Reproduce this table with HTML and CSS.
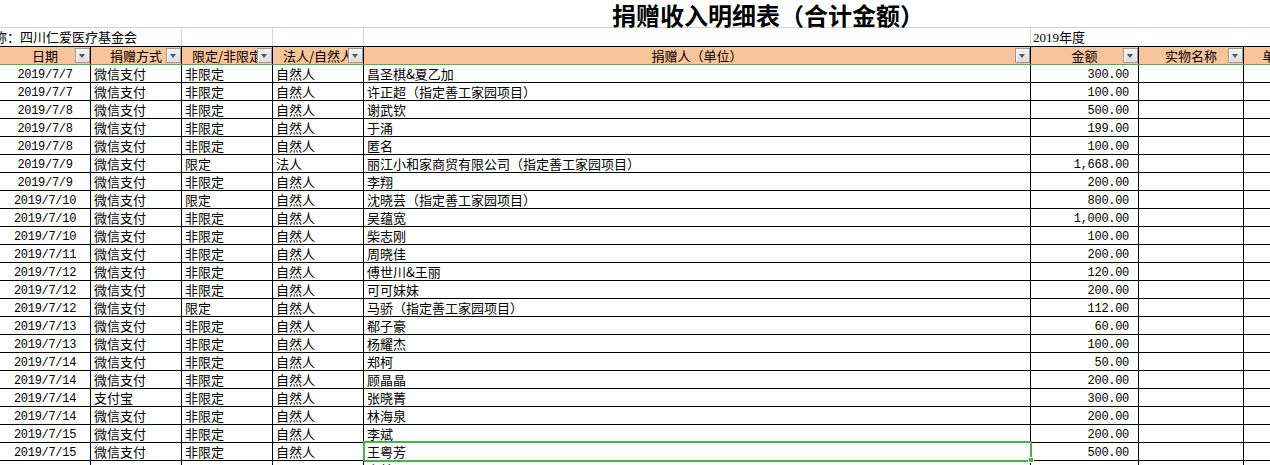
FILE: index.html
```html
<!DOCTYPE html>
<html lang="zh-CN">
<head>
<meta charset="utf-8">
<title>捐赠收入明细表</title>
<link rel="stylesheet" href="styles.css">
</head>
<body>
<div class="sheet">
  <div class="title-row"><span class="title">捐赠收入明细表（合计金额）</span></div>

  <div class="row info">
    <div class="cell span2"><span class="org">称：四川仁爱医疗基金会</span></div>
    <div class="cell g"></div>
    <div class="cell g"></div>
    <div class="cell g"></div>
    <div class="cell span3"><span class="yr">2019</span>年度</div>
  </div>

  <div class="row head">
    <div class="cell hc">日期<span class="fb"></span></div>
    <div class="cell hc">捐赠方式<span class="fb"></span></div>
    <div class="cell hc">限定/非限定<span class="fb"></span></div>
    <div class="cell hc">法人/自然人<span class="fb"></span></div>
    <div class="cell hc">捐赠人（单位）<span class="fb"></span></div>
    <div class="cell hc">金额<span class="fb"></span></div>
    <div class="cell hc">实物名称<span class="fb"></span></div>
    <div class="cell hc">单价<span class="fb"></span></div>
  </div>

  <div class="row"><div class="cell num c">2019/7/7</div><div class="cell">微信支付</div><div class="cell">非限定</div><div class="cell">自然人</div><div class="cell">昌圣棋&amp;夏乙加</div><div class="cell num r">300.00</div><div class="cell"></div><div class="cell"></div></div>
  <div class="row"><div class="cell num c">2019/7/7</div><div class="cell">微信支付</div><div class="cell">非限定</div><div class="cell">自然人</div><div class="cell">许正超（指定善工家园项目）</div><div class="cell num r">100.00</div><div class="cell"></div><div class="cell"></div></div>
  <div class="row"><div class="cell num c">2019/7/8</div><div class="cell">微信支付</div><div class="cell">非限定</div><div class="cell">自然人</div><div class="cell">谢武钦</div><div class="cell num r">500.00</div><div class="cell"></div><div class="cell"></div></div>
  <div class="row"><div class="cell num c">2019/7/8</div><div class="cell">微信支付</div><div class="cell">非限定</div><div class="cell">自然人</div><div class="cell">于涌</div><div class="cell num r">199.00</div><div class="cell"></div><div class="cell"></div></div>
  <div class="row"><div class="cell num c">2019/7/8</div><div class="cell">微信支付</div><div class="cell">非限定</div><div class="cell">自然人</div><div class="cell">匿名</div><div class="cell num r">100.00</div><div class="cell"></div><div class="cell"></div></div>
  <div class="row"><div class="cell num c">2019/7/9</div><div class="cell">微信支付</div><div class="cell">限定</div><div class="cell">法人</div><div class="cell">丽江小和家商贸有限公司（指定善工家园项目）</div><div class="cell num r">1,668.00</div><div class="cell"></div><div class="cell"></div></div>
  <div class="row"><div class="cell num c">2019/7/9</div><div class="cell">微信支付</div><div class="cell">非限定</div><div class="cell">自然人</div><div class="cell">李翔</div><div class="cell num r">200.00</div><div class="cell"></div><div class="cell"></div></div>
  <div class="row"><div class="cell num c">2019/7/10</div><div class="cell">微信支付</div><div class="cell">限定</div><div class="cell">自然人</div><div class="cell">沈晓芸（指定善工家园项目）</div><div class="cell num r">800.00</div><div class="cell"></div><div class="cell"></div></div>
  <div class="row"><div class="cell num c">2019/7/10</div><div class="cell">微信支付</div><div class="cell">非限定</div><div class="cell">自然人</div><div class="cell">吴蕴宽</div><div class="cell num r">1,000.00</div><div class="cell"></div><div class="cell"></div></div>
  <div class="row"><div class="cell num c">2019/7/10</div><div class="cell">微信支付</div><div class="cell">非限定</div><div class="cell">自然人</div><div class="cell">柴志刚</div><div class="cell num r">100.00</div><div class="cell"></div><div class="cell"></div></div>
  <div class="row"><div class="cell num c">2019/7/11</div><div class="cell">微信支付</div><div class="cell">非限定</div><div class="cell">自然人</div><div class="cell">周晓佳</div><div class="cell num r">200.00</div><div class="cell"></div><div class="cell"></div></div>
  <div class="row"><div class="cell num c">2019/7/12</div><div class="cell">微信支付</div><div class="cell">非限定</div><div class="cell">自然人</div><div class="cell">傅世川&amp;王丽</div><div class="cell num r">120.00</div><div class="cell"></div><div class="cell"></div></div>
  <div class="row"><div class="cell num c">2019/7/12</div><div class="cell">微信支付</div><div class="cell">非限定</div><div class="cell">自然人</div><div class="cell">可可妹妹</div><div class="cell num r">200.00</div><div class="cell"></div><div class="cell"></div></div>
  <div class="row"><div class="cell num c">2019/7/12</div><div class="cell">微信支付</div><div class="cell">限定</div><div class="cell">自然人</div><div class="cell">马骄（指定善工家园项目）</div><div class="cell num r">112.00</div><div class="cell"></div><div class="cell"></div></div>
  <div class="row"><div class="cell num c">2019/7/13</div><div class="cell">微信支付</div><div class="cell">非限定</div><div class="cell">自然人</div><div class="cell">郗子豪</div><div class="cell num r">60.00</div><div class="cell"></div><div class="cell"></div></div>
  <div class="row"><div class="cell num c">2019/7/13</div><div class="cell">微信支付</div><div class="cell">非限定</div><div class="cell">自然人</div><div class="cell">杨耀杰</div><div class="cell num r">100.00</div><div class="cell"></div><div class="cell"></div></div>
  <div class="row"><div class="cell num c">2019/7/14</div><div class="cell">微信支付</div><div class="cell">非限定</div><div class="cell">自然人</div><div class="cell">郑柯</div><div class="cell num r">50.00</div><div class="cell"></div><div class="cell"></div></div>
  <div class="row"><div class="cell num c">2019/7/14</div><div class="cell">微信支付</div><div class="cell">非限定</div><div class="cell">自然人</div><div class="cell">顾晶晶</div><div class="cell num r">200.00</div><div class="cell"></div><div class="cell"></div></div>
  <div class="row"><div class="cell num c">2019/7/14</div><div class="cell">支付宝</div><div class="cell">非限定</div><div class="cell">自然人</div><div class="cell">张晓菁</div><div class="cell num r">300.00</div><div class="cell"></div><div class="cell"></div></div>
  <div class="row"><div class="cell num c">2019/7/14</div><div class="cell">微信支付</div><div class="cell">非限定</div><div class="cell">自然人</div><div class="cell">林海泉</div><div class="cell num r">200.00</div><div class="cell"></div><div class="cell"></div></div>
  <div class="row"><div class="cell num c">2019/7/15</div><div class="cell">微信支付</div><div class="cell">非限定</div><div class="cell">自然人</div><div class="cell">李斌</div><div class="cell num r">200.00</div><div class="cell"></div><div class="cell"></div></div>
  <div class="row"><div class="cell num c">2019/7/15</div><div class="cell">微信支付</div><div class="cell">非限定</div><div class="cell">自然人</div><div class="cell sel">王粤芳<span class="handle"></span></div><div class="cell num r">500.00</div><div class="cell"></div><div class="cell"></div></div>
  <div class="row"><div class="cell"></div><div class="cell"></div><div class="cell"></div><div class="cell"></div><div class="cell">宋林</div><div class="cell"></div><div class="cell"></div><div class="cell"></div></div>
</div>
</body>
</html>
```

FILE: styles.css
```css
* { box-sizing: border-box; }

body {
  margin: 0;
  background: #fff;
  color: #000;
  font-family: "Noto Sans CJK SC", "Liberation Sans", sans-serif;
  font-size: 13px;
}

.sheet {
  width: 1270px;
  height: 465px;
  overflow: hidden;
  position: relative;
}

.title-row {
  height: 28px;
  border-bottom: 1px solid #d4d4d4;
  padding-left: 612px;
  display: flex;
  align-items: center;
  white-space: nowrap;
}

.title {
  font-size: 24px;
  font-weight: 700;
  line-height: 26px;
  padding-top: 2px;
}

.row {
  display: grid;
  grid-template-columns: 91px 91px 91px 91px 667px 108px 105px 64px;
  height: 18px;
  width: 1308px;
}

.cell {
  border-right: 1px solid #000;
  border-bottom: 1px solid #000;
  overflow: hidden;
  white-space: nowrap;
  padding: 0 3px;
  line-height: 17px;
  position: relative;
}

/* info row (row 2) */
.info .cell {
  border-bottom: none;
  border-right: 1px solid #d4d4d4;
  line-height: 18px;
}
.info .span2 { grid-column: span 2; overflow: visible; padding-left: 0; }
.info .span3 { grid-column: span 3; border-right: none; padding-left: 2px; }
.org { display: inline-block; margin-left: -6px; }
.yr { font-family: "Liberation Serif", serif; font-size: 13px; }

/* header row */
.head {
  height: 19px;
  background: #f8c49a;
  border-top: 1px solid #000;
  border-bottom: 1px solid #4caf50;
}
.head .cell {
  border-bottom: none;
  text-align: center;
  padding: 0;
  line-height: 17px;
  text-overflow: clip;
}

.fb {
  position: absolute;
  right: 0;
  top: 1px;
  width: 15px;
  height: 15px;
  background: linear-gradient(#f2f2f2, #dcdcdc);
  border: 1px solid #9a9a9a;
  box-shadow: inset 1px 1px 0 #fff;
}
.fb::after {
  content: "";
  position: absolute;
  left: 3px;
  top: 5px;
  border-left: 3.5px solid transparent;
  border-right: 3.5px solid transparent;
  border-top: 4px solid #555;
}

/* numeric cells */
.num {
  font-family: "Liberation Mono", monospace;
  font-size: 12px;
  letter-spacing: -0.3px;
  padding-top: 2px;
}
.c { text-align: center; }
.r { text-align: right; padding-right: 9px; }

/* selected cell */
.sel::after {
  content: "";
  position: absolute;
  top: -2px;
  left: -1px;
  right: -2px;
  bottom: -2px;
  border: 2px solid #4caf50;
  pointer-events: none;
}
.sel { overflow: visible; }
.handle {
  position: absolute;
  right: -4px;
  bottom: -3px;
  width: 6px;
  height: 6px;
  background: #4caf50;
  border: 1px solid #fff;
  z-index: 2;
}
```
